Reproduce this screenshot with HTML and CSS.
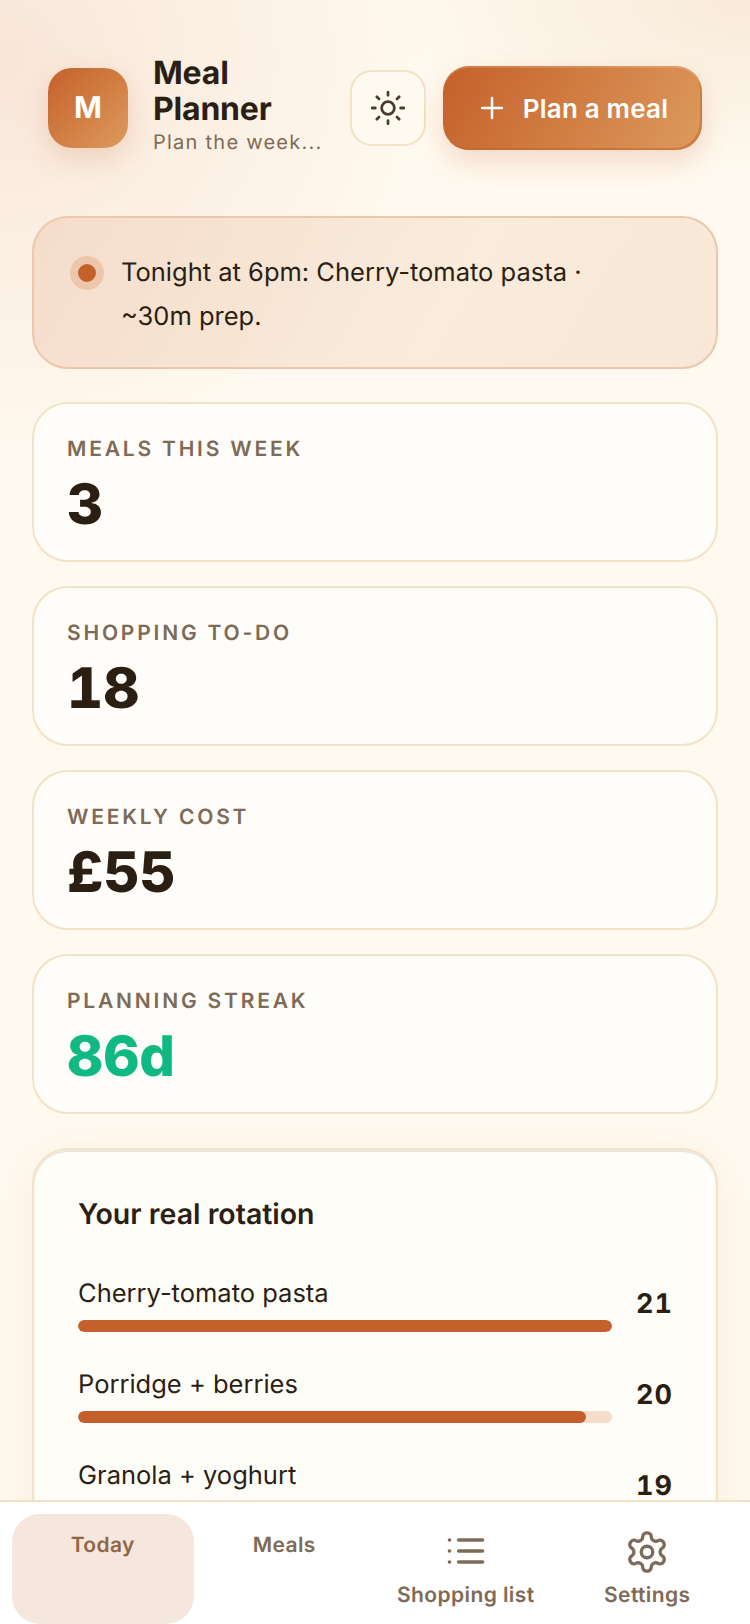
FILE: index.html
```html
<!DOCTYPE html>
<html lang="en">
<head>
    <meta charset="UTF-8">
    <meta name="viewport" content="width=device-width, initial-scale=1.0">
    <title>Meal Planner</title>
    <link rel="stylesheet" href="styles.css">
</head>
<body>
    <main class="page">
        <header class="top">
            <div class="logo">M</div>
            <div class="brand">
                <h1>Meal Planner</h1>
                <p>Plan the week...</p>
            </div>
            <button class="theme-btn" aria-label="Theme">
                <svg viewBox="0 0 24 24" width="38" height="38"><circle cx="12" cy="12" r="4"/><path d="M12 2v2M12 20v2M4.93 4.93l1.41 1.41M17.66 17.66l1.41 1.41M2 12h2M20 12h2M6.34 17.66l-1.41 1.41M19.07 4.93l-1.41 1.41"/></svg>
            </button>
            <button class="plan-btn">
                <svg viewBox="0 0 24 24" width="34" height="34"><path d="M5 12h14M12 5v14"/></svg>
                Plan a meal
            </button>
        </header>

        <section class="notice">
            <span class="notice-dot"></span>
            <p>Tonight at 6pm: Cherry-tomato pasta · ~30m prep.</p>
        </section>

        <section class="stat">
            <div class="stat-label">Meals this week</div>
            <div class="stat-value">3</div>
        </section>
        <section class="stat">
            <div class="stat-label">Shopping to-do</div>
            <div class="stat-value">18</div>
        </section>
        <section class="stat">
            <div class="stat-label">Weekly cost</div>
            <div class="stat-value">£55</div>
        </section>
        <section class="stat">
            <div class="stat-label">Planning streak</div>
            <div class="stat-value green">86d</div>
        </section>

        <section class="panel">
            <h2>Your real rotation</h2>
            <div class="row">
                <div class="row-main">
                    <div class="row-name">Cherry-tomato pasta</div>
                    <div class="bar"><div class="bar-fill" style="width: 100%"></div></div>
                </div>
                <div class="row-count">21</div>
            </div>
            <div class="row">
                <div class="row-main">
                    <div class="row-name">Porridge + berries</div>
                    <div class="bar"><div class="bar-fill" style="width: 95.2%"></div></div>
                </div>
                <div class="row-count">20</div>
            </div>
            <div class="row">
                <div class="row-main">
                    <div class="row-name">Granola + yoghurt</div>
                    <div class="bar"><div class="bar-fill" style="width: 90.5%"></div></div>
                </div>
                <div class="row-count">19</div>
            </div>
        </section>
    </main>

    <nav class="tabs">
        <a class="tab active">Today</a>
        <a class="tab">Meals</a>
        <a class="tab">
            <svg class="list" viewBox="0 0 24 24" width="44" height="44"><path d="M8 6h13M8 12h13M8 18h13M3 6h.01M3 12h.01M3 18h.01"/></svg>
            Shopping list
        </a>
        <a class="tab">
            <svg class="gear" viewBox="0 0 24 24" width="46" height="46"><path d="M12.22 2h-.44a2 2 0 0 0-2 2v.18a2 2 0 0 1-1 1.73l-.43.25a2 2 0 0 1-2 0l-.15-.08a2 2 0 0 0-2.73.73l-.22.38a2 2 0 0 0 .73 2.73l.15.1a2 2 0 0 1 1 1.72v.51a2 2 0 0 1-1 1.74l-.15.09a2 2 0 0 0-.73 2.73l.22.38a2 2 0 0 0 2.73.73l.15-.08a2 2 0 0 1 2 0l.43.25a2 2 0 0 1 1 1.73V20a2 2 0 0 0 2 2h.44a2 2 0 0 0 2-2v-.18a2 2 0 0 1 1-1.73l.43-.25a2 2 0 0 1 2 0l.15.08a2 2 0 0 0 2.73-.73l.22-.39a2 2 0 0 0-.73-2.73l-.15-.08a2 2 0 0 1-1-1.74v-.5a2 2 0 0 1 1-1.74l.15-.09a2 2 0 0 0 .73-2.73l-.22-.38a2 2 0 0 0-2.73-.73l-.15.08a2 2 0 0 1-2 0l-.43-.25a2 2 0 0 1-1-1.73V4a2 2 0 0 0-2-2z"/><circle cx="12" cy="12" r="3"/></svg>
            Settings
        </a>
    </nav>
</body>
</html>
```

FILE: styles.css
```css
* { box-sizing: border-box; }

html, body { margin: 0; height: 100%; }

body {
    display: flex;
    flex-direction: column;
    height: 1624px;
    overflow: hidden;
    font-family: Inter, "Liberation Sans", sans-serif;
    text-rendering: geometricPrecision;
    color: #2b1f14;
    background-color: #fff9ef;
    background-image:
        radial-gradient(430px 400px at 0 60px, #f8e6d8 0%, rgba(248, 230, 216, 0) 100%),
        radial-gradient(360px 170px at 100% 0, #f8ead9 0%, rgba(248, 234, 217, 0) 100%);
    background-repeat: no-repeat;
}

svg { fill: none; stroke: currentColor; stroke-width: 1.75; stroke-linecap: round; stroke-linejoin: round; }

.page { flex: 1; min-height: 0; overflow: hidden; padding: 54px 32px 0; }

/* header */
.top { display: flex; align-items: center; padding: 0 16px; height: 108px; margin-bottom: 54px; }

.logo {
    flex: none;
    width: 80px;
    height: 80px;
    border-radius: 24px;
    display: flex;
    align-items: center;
    justify-content: center;
    color: #fff;
    font-size: 30px;
    font-weight: 700;
    background: linear-gradient(135deg, #c4602b, #dd9a5c);
    box-shadow: 0 10px 28px rgba(196, 96, 43, 0.2);
}

.brand { flex: none; width: 172px; margin: -5px 25px 0; }
.brand h1 { margin: 0; font-size: 32px; line-height: 36px; font-weight: 700; letter-spacing: -0.2px; }
.brand p { margin: 1px 0 0; font-size: 20px; line-height: 28px; color: #7d6b58; letter-spacing: 1.25px; white-space: nowrap; }

.theme-btn {
    flex: none;
    width: 76px;
    height: 76px;
    border: 2px solid #f2e2c6;
    border-radius: 22px;
    background: #fffaf0;
    color: #4b3d2e;
    display: flex;
    align-items: center;
    justify-content: center;
    padding: 0;
    margin-right: 17px;
}

.plan-btn {
    flex: none;
    width: 259px;
    height: 84px;
    border: none;
    border-radius: 26px;
    color: #fff;
    font-family: inherit;
    font-size: 26px;
    font-weight: 600;
    letter-spacing: 0.2px;
    display: flex;
    align-items: center;
    justify-content: center;
    gap: 14px;
    padding: 0 2px 0 0;
    background: linear-gradient(120deg, #c4602b, #dd9a5c);
    box-shadow: 0 12px 28px rgba(196, 96, 43, 0.2), inset 0 2px 0 rgba(255, 255, 255, 0.15), inset -2px -2px 0 rgba(196, 96, 43, 0.5);
}

/* notice */
.notice {
    display: flex;
    gap: 17px;
    height: 153px;
    margin-bottom: 33px;
    padding: 33px 60px 0 36px;
    border: 2px solid #edc7ac;
    border-radius: 36px;
    background: linear-gradient(120deg, #f5dccb, #f9ecdb 60%, #f7e7d6);
}

.notice-dot {
    flex: none;
    width: 34px;
    height: 34px;
    margin-top: 5px;
    border-radius: 50%;
    background: #c4602b;
    border: 8px solid #edc7ac;
}

.notice p { margin: 0; font-size: 25.5px; line-height: 44px; color: #2b1f14; }

/* stat cards */
.stat {
    height: 160px;
    margin-bottom: 24px;
    padding: 31px 32px 0;
    border: 2px solid #f2e2c6;
    border-radius: 36px;
    background: #fffdf9;
}

.stat-label { padding-left: 1px; font-size: 21px; line-height: 30px; font-weight: 600; letter-spacing: 2.8px; text-transform: uppercase; color: #7d6b58; }
.stat-value { font-size: 56px; line-height: 64px; font-weight: 800; margin-top: 7px; padding-left: 1px; font-variant-numeric: tabular-nums; }
.stat-value.green { color: #10b981; }

/* rotation panel */
.panel {
    margin-top: 34px;
    height: 420px;
    padding: 44px 44px 0;
    border: 2px solid #f2e2c6;
    border-radius: 36px;
    background: #fffdf8;
    box-shadow: 0 10px 40px rgba(196, 96, 43, 0.08), inset 0 2px 0 #e8e6e0, inset 0 0 0 1px #f8f6f0;
}

.panel h2 { margin: 0 0 24px; font-size: 28.5px; line-height: 40px; font-weight: 600; }

.row { display: flex; align-items: center; gap: 24px; height: 91px; }
.row-main { flex: 1; }
.row-name { font-size: 25.5px; line-height: 36px; margin-bottom: 8px; }
.row-count { width: 36px; font-size: 27px; font-weight: 700; letter-spacing: 1px; white-space: nowrap; font-variant-numeric: tabular-nums; }

.bar { height: 12px; border-radius: 6px; background: #f5dccb; overflow: hidden; }
.bar-fill { height: 100%; border-radius: 6px; background: #c4602b; }

/* bottom tabs */
.tabs {
    flex: none;
    display: grid;
    grid-template-columns: repeat(4, 1fr);
    height: 124px;
    padding: 12px 12px 0;
    border-top: 2px solid #f2e2c6;
    background: #fff;
}

.tab {
    display: flex;
    flex-direction: column;
    align-items: center;
    gap: 9px;
    padding-top: 18px;
    border-radius: 28px;
    font-size: 21px;
    line-height: 28px;
    font-weight: 600;
    letter-spacing: 0.4px;
    color: #7d6b58;
}

.tab svg { margin-top: -3px; }
.tab svg.list { stroke-width: 2; }
.tab svg.gear { margin-bottom: -2px; }

.tab.active { background: #f5e6de; color: #8f6746; }
```
